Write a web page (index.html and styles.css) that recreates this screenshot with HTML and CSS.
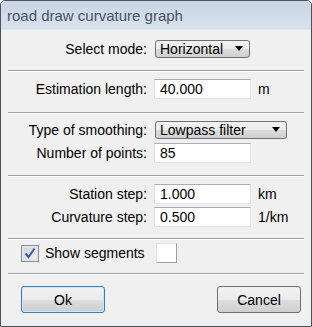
FILE: index.html
```html
<!DOCTYPE html>
<html>
<head>
<meta charset="utf-8">
<link rel="stylesheet" href="styles.css">
</head>
<body>
<div class="window">
  <div class="titlebar">road draw curvature graph</div>
  <div class="content">
    <div class="section s1">
      <div class="row">
        <span class="label">Select mode:</span>
        <div class="combo w-short"><span>Horizontal</span><span class="arrow"></span></div>
      </div>
    </div>
    <div class="sep"></div>
    <div class="section s2">
      <div class="row">
        <span class="label">Estimation length:</span>
        <div class="input">40.000</div>
        <span class="unit">m</span>
      </div>
    </div>
    <div class="sep"></div>
    <div class="section s3">
      <div class="row">
        <span class="label">Type of smoothing:</span>
        <div class="combo w-long"><span>Lowpass filter</span><span class="arrow"></span></div>
      </div>
      <div class="row gap4">
        <span class="label">Number of points:</span>
        <div class="input">85</div>
      </div>
    </div>
    <div class="sep"></div>
    <div class="section s4">
      <div class="row">
        <span class="label">Station step:</span>
        <div class="input">1.000</div>
        <span class="unit">km</span>
      </div>
      <div class="row gap3">
        <span class="label">Curvature step:</span>
        <div class="input">0.500</div>
        <span class="unit">1/km</span>
      </div>
    </div>
    <div class="sep"></div>
    <div class="section s5">
      <div class="checkrow">
        <span class="checkbox">
          <svg width="12" height="12" viewBox="0 0 12 12"><path d="M1.5 6.5 L4.5 10 L10.5 1.5" fill="none" stroke="#3b5ca3" stroke-width="2"/></svg>
        </span>
        <span class="checklabel">Show segments</span>
        <span class="swatch"></span>
      </div>
    </div>
    <div class="sep"></div>
    <div class="section s6">
      <button class="btn default">Ok</button>
      <button class="btn">Cancel</button>
    </div>
  </div>
</div>
</body>
</html>
```

FILE: styles.css
```css
html, body {
  margin: 0;
  padding: 0;
  background: #f0f0f0;
}
.window {
  width: 312px;
  height: 327px;
  box-sizing: border-box;
  border: 1px solid #4d535b;
  border-radius: 5px 5px 0 0;
  background: #f0f0f0;
  font-family: "Liberation Sans", Arial, sans-serif;
  font-size: 14px;
  color: #000;
  overflow: hidden;
}
.titlebar {
  height: 29px;
  box-sizing: border-box;
  padding: 6px 0 0 6px;
  font-size: 15px;
  line-height: 17px;
  color: #4a5361;
  background: linear-gradient(#c8d5e3, #d9e3ee);
  border-bottom: 1px solid #dfe7f0;
}
.content {
  display: flex;
  flex-direction: column;
}
.sep {
  height: 1px;
  background: #a0a0a0;
  border-bottom: 1px solid #ffffff;
  margin: 0 7px;
}
.section { display: flex; flex-direction: column; }
.s1 { padding: 10px 0 12px; }
.s2 { padding: 7px 0 13px; }
.s3 { padding: 7px 0 12px; }
.s4 { padding: 7px 0 11px; }
.s5 { padding: 3px 0 10px; }
.s6 { padding: 11px 10px 0 20px; flex-direction: row; justify-content: space-between; }
.row {
  display: flex;
  align-items: center;
}
.gap4 { margin-top: 4px; }
.gap3 { margin-top: 3px; }
.label {
  width: 146px;
  text-align: right;
  flex: none;
}
.combo {
  margin-left: 8px;
  height: 18px;
  box-sizing: border-box;
  border: 1px solid #707070;
  border-radius: 3px;
  background: linear-gradient(#f3f3f3 0%, #ebebeb 50%, #dddddd 51%, #cfcfcf 100%);
  display: flex;
  align-items: center;
  justify-content: space-between;
  padding: 0 6px 0 4px;
  line-height: 16px;
}
.w-short { width: 95px; }
.w-long { width: 132px; }
.arrow {
  width: 0;
  height: 0;
  border-left: 4.5px solid transparent;
  border-right: 4.5px solid transparent;
  border-top: 5px solid #000;
  margin-bottom: 2px;
}
.input {
  margin-left: 7px;
  width: 97px;
  height: 20px;
  box-sizing: border-box;
  background: #fff;
  border: 1px solid #e2e3ea;
  border-top-color: #abadb3;
  border-left-color: #dbdfe6;
  padding-left: 5px;
  line-height: 18px;
}
.unit {
  margin-left: 7px;
}
.checkrow {
  display: flex;
  align-items: center;
  height: 20px;
}
.checkbox {
  margin-left: 20px;
  width: 18px;
  height: 17px;
  box-sizing: border-box;
  border: 1px solid #8e8f8f;
  background: linear-gradient(135deg, #cbcfd5, #f6f6f6);
  display: flex;
  align-items: center;
  justify-content: center;
  box-shadow: inset 0 0 0 2px #dfe3ea;
}
.checkbox svg { display: block; }
.checklabel {
  margin-left: 6px;
}
.swatch {
  margin-left: 11px;
  width: 21px;
  height: 20px;
  box-sizing: border-box;
  background: #fff;
  border: 1px solid #a0a0a0;
  border-top-color: #e3e3e3;
  border-left-color: #e3e3e3;
}
.btn {
  width: 84px;
  height: 27px;
  box-sizing: border-box;
  border: 1px solid #707070;
  border-radius: 3px;
  background: linear-gradient(#f2f2f2 0%, #ebebeb 50%, #dddddd 51%, #cfcfcf 100%);
  font-family: "Liberation Sans", Arial, sans-serif;
  font-size: 14px;
  color: #000;
  padding: 0;
}
.btn.default {
  border-color: #3c7fb1;
  box-shadow: inset 0 0 0 1px #cfe6f5;
}
```
